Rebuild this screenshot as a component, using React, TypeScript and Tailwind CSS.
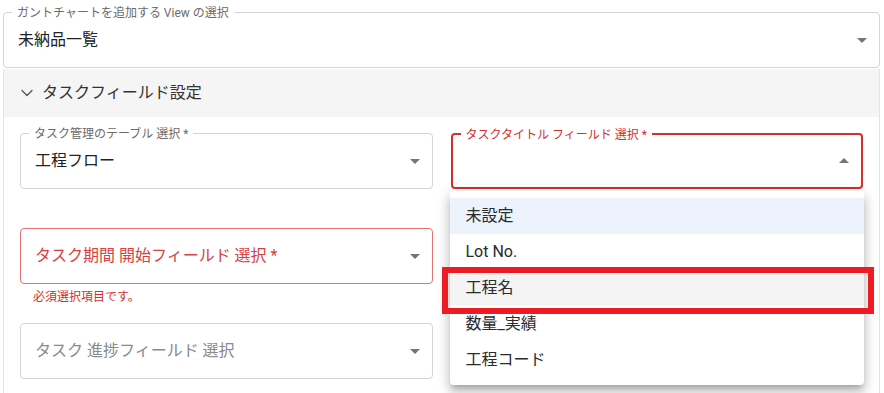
import { ReactNode } from 'react'

const ArrowDrop = ({ up = false }: { up?: boolean }) => (
  <svg width="24" height="24" viewBox="0 0 24 24" className="shrink-0 fill-[#757575]">
    <path d={up ? 'M7 14l5-5 5 5z' : 'M7 10l5 5 5-5z'} />
  </svg>
)

type FieldProps = {
  label?: string
  value?: string
  error?: boolean
  focused?: boolean
  open?: boolean
  helper?: string
  children?: ReactNode
}

const SelectField = ({ label, value, error, focused, open, helper, children }: FieldProps) => {
  const shrink = Boolean(value) || focused
  const border = focused
    ? 'border-2 border-[#d32f2f]'
    : error
      ? 'border border-[#e57373]'
      : 'border border-[#d4d4d4]'

  return (
    <div className="relative">
      <div className={`relative flex h-[56px] items-center justify-between rounded-[4px] pl-[14px] pr-[5px] ${border}`}>
        {shrink && label && (
          <span
            className={`absolute left-[8px] top-0 -translate-y-1/2 bg-white px-[5px] text-[12px] leading-none ${
              error || focused ? 'text-[#d32f2f]' : 'text-[#6b6b6b]'
            }`}
          >
            {label}
          </span>
        )}
        {shrink ? (
          <span className="text-[16px] text-[#222]">{value}</span>
        ) : (
          <span className={`text-[16px] ${error ? 'text-[#d8413f]' : 'text-[#8a8a8a]'}`}>{label}</span>
        )}
        <ArrowDrop up={open} />
      </div>
      <div className="h-[23px] pl-[13px] pt-[3px]">
        {helper && <p className="text-[12px] leading-[20px] text-[#d32f2f]">{helper}</p>}
      </div>
      {children}
    </div>
  )
}

const options = ['未設定', 'Lot No.', '工程名', '数量_実績', '工程コード']

const App = () => {
  return (
    <div className="relative h-[393px] w-[884px] overflow-hidden bg-white font-['Roboto','Noto_Sans_CJK_JP',sans-serif]">
      <div className="pl-[3px] pr-[4px] pt-[12px]">
        {/* View selector */}
        <div className="relative flex h-[56px] items-center justify-between rounded-[4px] border border-[#d4d4d4] pl-[14px] pr-[5px]">
          <span className="absolute left-[8px] top-0 -translate-y-1/2 bg-white px-[5px] text-[12px] leading-none text-[#6b6b6b]">
            ガントチャートを追加する View の選択
          </span>
          <span className="text-[16px] text-[#222]">未納品一覧</span>
          <ArrowDrop />
        </div>

        {/* Accordion */}
        <div className="mt-[1px] border-x border-[#e3e3e3]">
          <div className="flex h-[48px] items-center gap-[9px] bg-[#f5f5f5] pl-[17px]">
            <svg width="12" height="8" viewBox="0 0 12 8" fill="none" stroke="#555" strokeWidth="1.3" strokeLinecap="round" strokeLinejoin="round">
              <polyline points="1 1.5 6 6.5 11 1.5" />
            </svg>
            <span className="text-[16px] text-[#333]">タスクフィールド設定</span>
          </div>

          <div className="grid grid-cols-2 gap-x-[18px] gap-y-[16px] px-[16px] pt-[16px]">
            <SelectField label="タスク管理のテーブル 選択 *" value="工程フロー" />
            <SelectField label="タスクタイトル フィールド 選択 *" focused open error>
              <div className="absolute left-[-1px] top-[58px] z-20 w-[414px] rounded-[4px] bg-white py-[7px] shadow-[0px_5px_5px_-3px_rgba(0,0,0,0.2),0px_8px_10px_1px_rgba(0,0,0,0.14),0px_3px_14px_2px_rgba(0,0,0,0.12)]">
                {options.map((opt, i) => (
                  <div
                    key={opt}
                    className={`flex h-[36px] items-center px-[16px] text-[16px] text-[#2b2b2b] ${
                      i === 0 ? 'bg-[#edf3fc]' : i === 2 ? 'bg-[#f4f4f4]' : ''
                    }`}
                  >
                    {opt}
                  </div>
                ))}
              </div>
            </SelectField>
            <SelectField label="タスク期間 開始フィールド 選択 *" error helper="必須選択項目です。" />
            {/* covered by the open menu */}
            <SelectField error />
            <SelectField label="タスク 進捗フィールド 選択" />
            <SelectField />
          </div>
        </div>
      </div>

      {/* highlight annotation */}
      <div className="absolute left-[442px] top-[267px] z-30 h-[47px] w-[432px] border-[6px] border-[#ed1c24]" />
    </div>
  )
}

export default App
